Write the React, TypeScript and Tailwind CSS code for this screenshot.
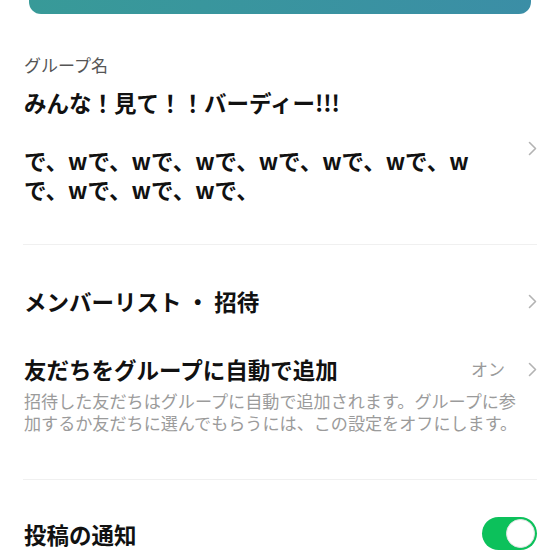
import React from "react";

const Chevron = ({ className = "" }: { className?: string }) => (
  <svg
    className={className}
    width="9"
    height="15"
    viewBox="0 0 9 15"
    fill="none"
    stroke="#b3b3b3"
    strokeWidth="1.6"
    strokeLinecap="round"
    strokeLinejoin="round"
  >
    <path d="M1.5 1.5l6 6-6 6" />
  </svg>
);

const Divider = () => <div className="mx-[23px] h-px bg-[#f0f0f0]" />;

export default function App() {
  return (
    <div className="w-[560px] h-[560px] overflow-hidden bg-white text-[#111] font-['Noto_Sans_CJK_JP','Noto_Sans',sans-serif]">
      {/* top banner edge */}
      <div className="mx-[29px] h-[14px] rounded-b-[12px] bg-gradient-to-r from-[#389a98] to-[#3b8ea6]" />

      {/* group name */}
      <div className="flex pl-6 pr-[23px] pt-[39px] pb-[40px]">
        <div className="flex-1">
          <p className="text-[17px] leading-6 text-[#555]">グループ名</p>
          <p className="mt-[10px] text-[22.5px] leading-[30px] font-bold">みんな！見て！！バーディー!!!</p>
          <p className="mt-[29px] w-[466px] text-[22.5px] leading-[29px] font-bold">
            {"で、w".repeat(10) + "で、"}
          </p>
        </div>
        <Chevron className="mt-[88px] shrink-0" />
      </div>

      <Divider />

      <div className="pl-6 pr-[23px] pt-[41px]">
        <div className="flex items-center justify-between">
          <span className="text-[22.5px] leading-[30px] font-bold">メンバーリスト ・ 招待</span>
          <Chevron />
        </div>

        <div className="mt-[38px] flex items-center justify-between">
          <span className="text-[22.5px] leading-[30px] font-bold">友だちをグループに自動で追加</span>
          <div className="flex items-center gap-[23px]">
            <span className="text-[17px] leading-[30px] text-[#9a9a9a]">オン</span>
            <Chevron />
          </div>
        </div>

        <p className="mt-[6px] w-[510px] text-[17.1px] leading-[22px] text-[#9b9b9b]">
          招待した友だちはグループに自動で追加されます。グループに参
          <br />
          加するか友だちに選んでもらうには、この設定をオフにします。
        </p>
      </div>

      <div className="mt-[45px]">
        <Divider />
      </div>

      <div className="flex items-center justify-between pl-6 pr-[23px] pt-[37px]">
        <span className="text-[22.5px] leading-[30px] font-bold">投稿の通知</span>
        <div className="flex h-[33px] w-[55px] items-center justify-end rounded-full bg-[#0cc15b] px-[2px]">
          <div className="h-[29px] w-[29px] rounded-full border border-[#e3e3e3] bg-white" />
        </div>
      </div>
    </div>
  );
}
